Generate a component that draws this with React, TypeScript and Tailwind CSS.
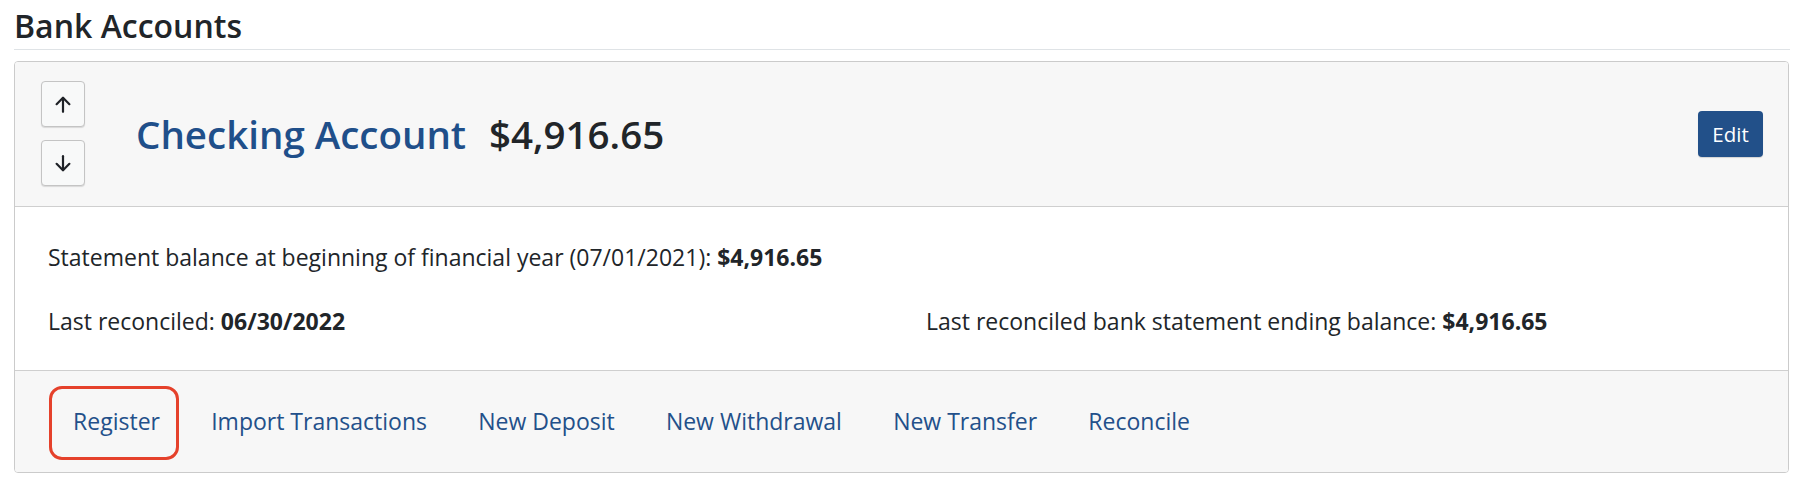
import React from "react";

function Arrow({ down }: { down?: boolean }) {
  return (
    <svg
      width="16"
      height="17"
      viewBox="0 0 16 17"
      fill="none"
      stroke="#1f2227"
      strokeWidth="2.2"
      strokeLinecap="round"
      strokeLinejoin="round"
      className={down ? "rotate-180" : ""}
    >
      <path d="M8 1.8v14" />
      <path d="M1.6 8.2L8 1.8l6.4 6.4" />
    </svg>
  );
}

export default function App() {
  const links = [
    "Register",
    "Import Transactions",
    "New Deposit",
    "New Withdrawal",
    "New Transfer",
    "Reconcile",
  ];
  return (
    <div
      className="w-[1804px] h-[486px] bg-white px-[14px] text-[#212529]"
      style={{ fontFamily: '"Open Sans", sans-serif' }}
    >
      <div className="pt-[8px] pb-[5px] border-b border-[#dfe3e6]">
        <h2 className="text-[32px] leading-[36px] font-semibold">Bank Accounts</h2>
      </div>
      <div className="mt-[11px] w-[1775px] border border-[#cbcbcb] rounded-[4px] overflow-hidden">
        <div className="bg-[#f7f7f7] border-b border-[#cfcfcf] pl-[26px] pr-[25px] pt-[19px] pb-[20px] flex items-center">
          <div className="flex flex-col gap-[13px]">
            <button className="w-[44px] h-[46px] flex items-center justify-center bg-[#f8f9f9] border border-[#c4c4c4] rounded-[4px] shadow-[0_1px_1px_rgba(0,0,0,0.12)]">
              <Arrow />
            </button>
            <button className="w-[44px] h-[46px] flex items-center justify-center bg-[#f8f9f9] border border-[#c4c4c4] rounded-[4px] shadow-[0_1px_1px_rgba(0,0,0,0.12)]">
              <Arrow down />
            </button>
          </div>
          <div className="ml-[51px] flex items-baseline gap-[23px]">
            <span className="text-[38.5px] leading-[50px] font-semibold text-[#1f4f8a]">
              Checking Account
            </span>
            <span className="text-[38.5px] leading-[50px] font-semibold text-[#212529]">
              $4,916.65
            </span>
          </div>
          <div className="flex-1" />
          <button className="w-[65px] h-[46px] rounded-[4px] bg-[#225089] text-white text-[20.5px] leading-[26px] shadow-[0_1px_1px_rgba(0,0,0,0.15)]">
            Edit
          </button>
        </div>
        <div className="bg-white pl-[33px] pr-[33px] pt-[34px] pb-[32px] text-[23px] leading-[33px]">
          <div>
            Statement balance at beginning of financial year (07/01/2021):{" "}
            <span className="font-bold">$4,916.65</span>
          </div>
          <div className="mt-[31px] grid grid-cols-2 gap-x-[49px]">
            <div>
              Last reconciled: <span className="font-bold">06/30/2022</span>
            </div>
            <div>
              Last reconciled bank statement ending balance:{" "}
              <span className="font-bold">$4,916.65</span>
            </div>
          </div>
        </div>
        <div className="bg-[#f7f7f7] border-t border-[#cfcfcf] pl-[32.5px] pt-[34px] pb-[34px] flex text-[23px] leading-[33px] text-[#23508a]">
          {links.map((l, i) => (
            <div key={l} className="relative px-[25.6px]">
              <a href="#">{l}</a>
              {i === 0 && (
                <span className="absolute left-[1px] right-[7px] top-[-19px] bottom-[-22px] border-[3px] border-[#e5412b] rounded-[13px] pointer-events-none" />
              )}
            </div>
          ))}
        </div>
      </div>
    </div>
  );
}
